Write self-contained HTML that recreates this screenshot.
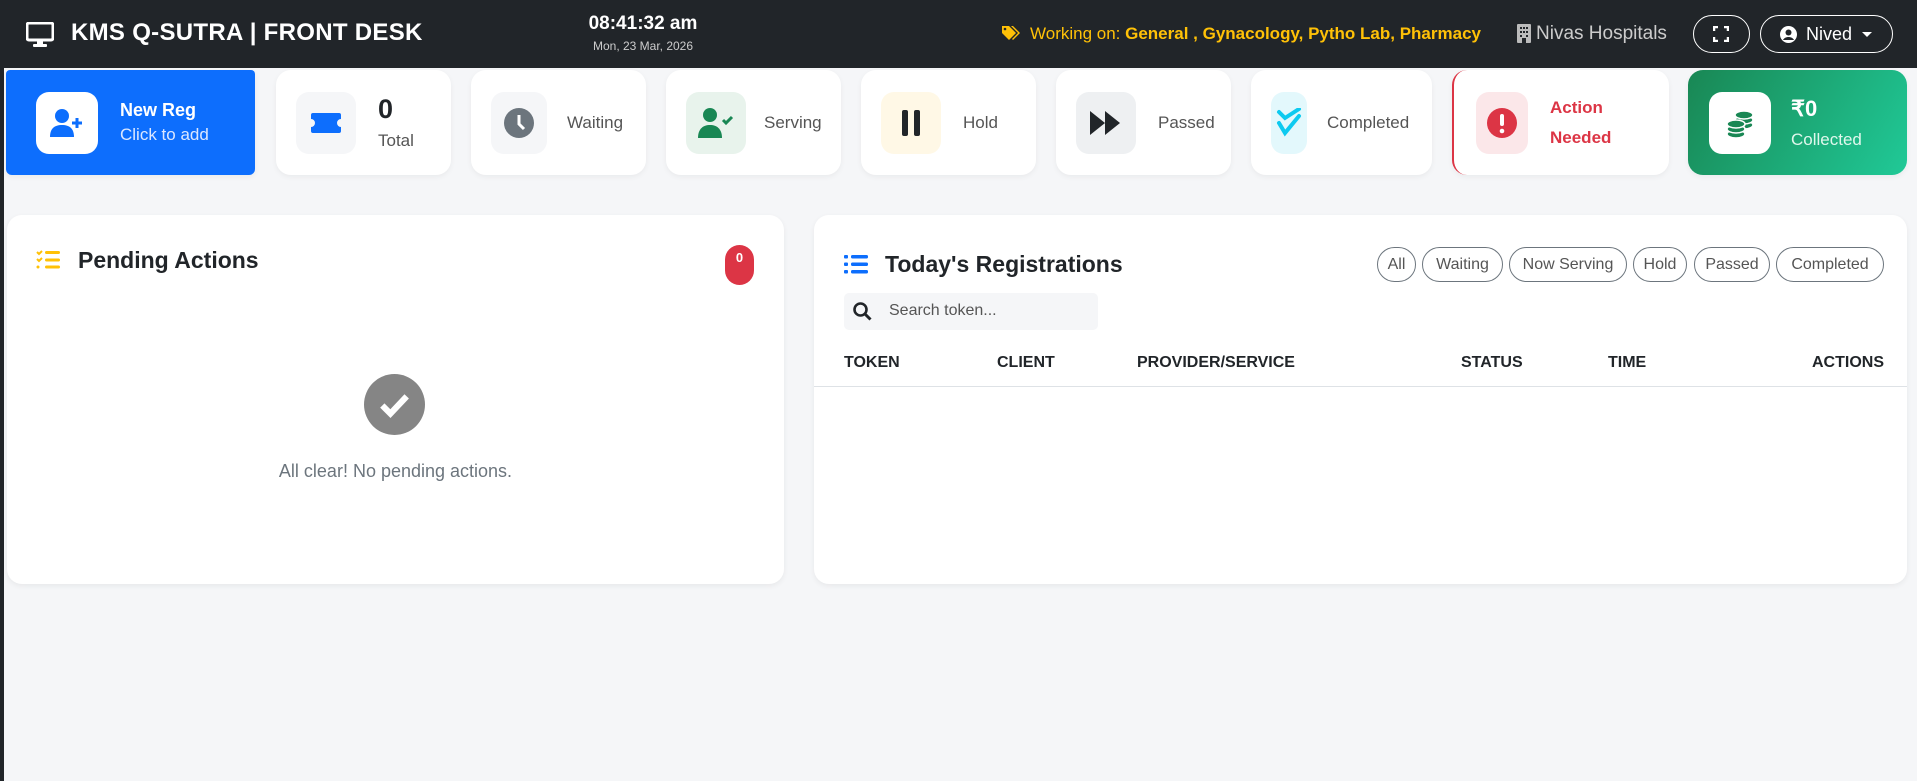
<!DOCTYPE html>
<html><head><meta charset="utf-8"><style>
*{box-sizing:border-box;margin:0;padding:0}
body{width:1917px;height:781px;background:#f5f6f8;font-family:"Liberation Sans",sans-serif;position:relative;overflow:hidden;color:#212529}
.a{position:absolute}
.hdr{left:0;top:0;width:1917px;height:68px;background:#212529}
.lb{left:0;top:0;width:4px;height:781px;background:#212529}
.card{position:absolute;top:70px;height:105px;background:#fff;border-radius:15px;box-shadow:0 2px 6px rgba(0,0,0,.05);display:flex;align-items:center;padding-left:20px}
.ib{width:60px;height:62px;border-radius:13px;display:flex;align-items:center;justify-content:center;flex-shrink:0}
.lab{font-size:17px;color:#555;margin-left:22px}
.panel{position:absolute;top:215px;height:369px;background:#fff;border-radius:15px;box-shadow:0 2px 6px rgba(0,0,0,.06)}
.pill{position:absolute;top:247px;height:35px;border:1px solid #6c757d;border-radius:18px;font-size:16px;color:#555;display:flex;align-items:center;justify-content:center}
.th{position:absolute;top:354px;font-size:16px;font-weight:bold;color:#212529}
</style></head><body>
<div class="a hdr"></div>
<div class="a lb"></div>
<svg class="a" style="left:26px;top:22px" width="28" height="26" viewBox="0 0 28 26"><rect x="1" y="1" width="26" height="17" rx="2" fill="none" stroke="#fff" stroke-width="3"/><rect x="11" y="18" width="6" height="5" fill="#fff"/><rect x="7" y="22" width="14" height="3" rx="1" fill="#fff"/></svg>
<div class="a" style="left:71px;top:19px;color:#fff;font-size:24px;font-weight:bold;letter-spacing:0.3px">KMS Q-SUTRA | FRONT DESK</div>
<div class="a" style="left:543px;top:13px;width:200px;text-align:center;color:#fff;font-size:19px;font-weight:bold">08:41:32 am</div>
<div class="a" style="left:543px;top:39px;width:200px;text-align:center;color:#ccc;font-size:12px">Mon, 23 Mar, 2026</div>
<svg class="a" style="left:1002px;top:25px" width="18" height="16" viewBox="0 0 18 16"><path d="M0 1h7l7 7-7 7-7-7z" fill="#ffc107"/><path d="M9 1h2l7 7-7 7-1-1 6-6z" fill="#ffc107"/><circle cx="3" cy="4" r="1.3" fill="#212529"/></svg>
<div class="a" style="left:1030px;top:24px;color:#ffc107;font-size:17px">Working on: <b>General , Gynacology, Pytho Lab, Pharmacy</b></div>
<svg class="a" style="left:1517px;top:24px" width="14" height="19" viewBox="0 0 14 19"><rect width="14" height="19" rx="1" fill="#bbb"/><g fill="#212529"><rect x="3" y="3" width="2" height="2"/><rect x="6" y="3" width="2" height="2"/><rect x="9" y="3" width="2" height="2"/><rect x="3" y="7" width="2" height="2"/><rect x="6" y="7" width="2" height="2"/><rect x="9" y="7" width="2" height="2"/><rect x="3" y="11" width="2" height="2"/><rect x="9" y="11" width="2" height="2"/><rect x="5" y="14" width="4" height="5"/></g></svg>
<div class="a" style="left:1536px;top:23px;color:#ccc;font-size:19px">Nivas Hospitals</div>
<div class="a" style="left:1693px;top:15px;width:57px;height:38px;border:1px solid #fff;border-radius:19px"></div>
<svg class="a" style="left:1713px;top:26px" width="16" height="16" viewBox="0 0 16 16" fill="none" stroke="#fff" stroke-width="2.5"><path d="M1 5V1h4M11 1h4v4M15 11v4h-4M5 15H1v-4"/></svg>
<div class="a" style="left:1760px;top:15px;width:133px;height:38px;border:1px solid #fff;border-radius:19px"></div>
<svg class="a" style="left:1780px;top:26px" width="17" height="17" viewBox="0 0 17 17"><circle cx="8.5" cy="8.5" r="8.5" fill="#fff"/><circle cx="8.5" cy="6.5" r="3" fill="#212529"/><path d="M3 14c2-4 9-4 11 0" fill="#212529"/></svg>
<div class="a" style="left:1806px;top:24px;color:#fff;font-size:18px">Nived</div>
<div class="a" style="left:1862px;top:32px;width:0;height:0;border-left:5px solid transparent;border-right:5px solid transparent;border-top:5px solid #fff"></div>

<div class="card" style="left:6px;width:249px;background:#0d6efd;border-radius:4px 4px 6px 6px;padding-left:30px">
<div class="ib" style="background:#fff;width:62px"><svg width="34" height="30" viewBox="0 0 34 30"><circle cx="12" cy="8" r="7" fill="#0d6efd"/><path d="M0 29c0-9 5-12 12-12s12 3 12 12z" fill="#0d6efd"/><path d="M27 10v10M22 15h10" stroke="#0d6efd" stroke-width="3"/></svg></div>
<div style="margin-left:22px;color:#fff"><div style="font-size:18px;font-weight:bold">New Reg</div><div style="font-size:17px;margin-top:4px;color:#dbe7ff">Click to add</div></div></div>

<div class="card" style="left:276px;width:175px">
<div class="ib" style="background:#f5f6f8"><svg width="30" height="20" viewBox="0 0 30 20"><path d="M2 0h26a2 2 0 0 1 2 2v4a4 4 0 0 0 0 8v4a2 2 0 0 1-2 2H2a2 2 0 0 1-2-2v-4a4 4 0 0 0 0-8V2a2 2 0 0 1 2-2z" fill="#0d6efd"/></svg></div>
<div style="margin-left:22px"><div style="font-size:27px;font-weight:bold">0</div><div style="font-size:17px;color:#555;margin-top:6px">Total</div></div></div>

<div class="card" style="left:471px;width:175px">
<div class="ib" style="background:#f5f6f8;width:56px"><svg width="30" height="30" viewBox="0 0 30 30"><circle cx="15" cy="15" r="15" fill="#6c757d"/><path d="M15 7v9l5 5" stroke="#fff" stroke-width="3" fill="none"/></svg></div>
<div class="lab" style="margin-left:20px">Waiting</div></div>

<div class="card" style="left:666px;width:175px">
<div class="ib" style="background:#e8f3ec"><svg width="36" height="32" viewBox="0 0 36 32"><circle cx="12" cy="8" r="7" fill="#198754"/><path d="M0 31c0-9 5-13 12-13s12 4 12 13z" fill="#198754"/><path d="M25 13l3 3 6-6" stroke="#198754" stroke-width="3" fill="none"/></svg></div>
<div class="lab" style="margin-left:18px">Serving</div></div>

<div class="card" style="left:861px;width:175px">
<div class="ib" style="background:#fff8e6"><svg width="20" height="26" viewBox="0 0 20 26"><rect x="1" width="6" height="26" rx="2" fill="#212529"/><rect x="13" width="6" height="26" rx="2" fill="#212529"/></svg></div>
<div class="lab" style="margin-left:22px">Hold</div></div>

<div class="card" style="left:1056px;width:175px">
<div class="ib" style="background:#eef0f2"><svg width="32" height="24" viewBox="0 0 32 24"><path d="M0 0l15 12L0 24zM15 0l15 12-15 12z" fill="#212529"/></svg></div>
<div class="lab" style="margin-left:22px">Passed</div></div>

<div class="card" style="left:1251px;width:181px">
<div class="ib" style="background:#e3f8fc;width:36px"><svg width="26" height="30" viewBox="0 0 26 30"><path d="M3 4l6 6 14-9M3 15l6 10 14-17" stroke="#0dcaf0" stroke-width="4" fill="none" stroke-linecap="round"/></svg></div>
<div class="lab" style="margin-left:20px">Completed</div></div>

<div class="card" style="left:1452px;width:217px;border-left:2px solid #dc3545;padding-left:22px">
<div class="ib" style="background:#fbe7e9;width:52px"><svg width="30" height="30" viewBox="0 0 30 30"><circle cx="15" cy="15" r="15" fill="#dc3545"/><rect x="13" y="6" width="4" height="12" rx="2" fill="#fff"/><circle cx="15" cy="23" r="2.3" fill="#fff"/></svg></div>
<div style="margin-left:22px;color:#dc3545;font-size:17px;font-weight:bold;line-height:30px">Action<br>Needed</div></div>

<div class="card" style="left:1688px;width:219px;background:linear-gradient(120deg,#198754,#20c997);padding-left:21px">
<div class="ib" style="background:#fff;width:62px"><svg width="30" height="32" viewBox="0 0 30 32"><g fill="#198754" stroke="#fff" stroke-width="1.6"><ellipse cx="19" cy="18" rx="9" ry="4"/><ellipse cx="19" cy="13" rx="9" ry="4"/><ellipse cx="19" cy="8" rx="9" ry="4"/><ellipse cx="11" cy="27" rx="9" ry="4"/><ellipse cx="11" cy="22" rx="9" ry="4"/><ellipse cx="11" cy="17" rx="9" ry="4"/></g></svg></div>
<div style="margin-left:20px;color:#fff"><div style="font-size:22px;font-weight:bold">₹0</div><div style="font-size:17px;margin-top:8px;color:#dff7ec">Collected</div></div></div>

<div class="panel" style="left:7px;width:777px"></div>
<svg class="a" style="left:36px;top:250px" width="24" height="20" viewBox="0 0 24 20"><path d="M1 2l2 2 3-3M1 9l2 2 3-3" stroke="#ffc107" stroke-width="2" fill="none"/><circle cx="2" cy="17" r="1.5" fill="#ffc107"/><rect x="9" y="1" width="15" height="3" rx="1.5" fill="#ffc107"/><rect x="9" y="8.5" width="15" height="3" rx="1.5" fill="#ffc107"/><rect x="9" y="15.5" width="15" height="3" rx="1.5" fill="#ffc107"/></svg>
<div class="a" style="left:78px;top:247px;font-size:23px;font-weight:bold">Pending Actions</div>
<div class="a" style="left:725px;top:245px;width:29px;height:40px;background:#dc3545;border-radius:15px;color:#fff;font-size:13px;font-weight:bold;text-align:center;padding-top:5px">0</div>
<svg class="a" style="left:364px;top:374px" width="61" height="61" viewBox="0 0 60 60"><circle cx="30" cy="30" r="30" fill="#858585"/><path d="M18 31l8 8 16-17" stroke="#fff" stroke-width="6" fill="none"/></svg>
<div class="a" style="left:7px;top:461px;width:777px;text-align:center;font-size:18px;color:#6c757d">All clear! No pending actions.</div>

<div class="panel" style="left:814px;width:1093px"></div>
<svg class="a" style="left:844px;top:255px" width="24" height="19" viewBox="0 0 24 19" fill="#0d6efd"><rect width="4" height="3.5" rx="1"/><rect y="7.5" width="4" height="3.5" rx="1"/><rect y="15" width="4" height="3.5" rx="1"/><rect x="7" width="17" height="3.5" rx="1.5"/><rect x="7" y="7.5" width="17" height="3.5" rx="1.5"/><rect x="7" y="15" width="17" height="3.5" rx="1.5"/></svg>
<div class="a" style="left:885px;top:251px;font-size:23px;font-weight:bold">Today's Registrations</div>
<div class="pill" style="left:1377px;width:39px">All</div>
<div class="pill" style="left:1422px;width:81px">Waiting</div>
<div class="pill" style="left:1509px;width:118px">Now Serving</div>
<div class="pill" style="left:1633px;width:54px">Hold</div>
<div class="pill" style="left:1694px;width:76px">Passed</div>
<div class="pill" style="left:1776px;width:108px">Completed</div>
<div class="a" style="left:844px;top:293px;width:254px;height:37px;background:#f5f6f8;border-radius:5px"></div>
<svg class="a" style="left:853px;top:302px" width="19" height="19" viewBox="0 0 19 19"><circle cx="7.5" cy="7.5" r="6" stroke="#212529" stroke-width="2.6" fill="none"/><path d="M12 12l5.5 5.5" stroke="#212529" stroke-width="3"/></svg>
<div class="a" style="left:889px;top:302px;font-size:16px;color:#555">Search token...</div>
<div class="th" style="left:844px">TOKEN</div>
<div class="th" style="left:997px">CLIENT</div>
<div class="th" style="left:1137px">PROVIDER/SERVICE</div>
<div class="th" style="left:1461px">STATUS</div>
<div class="th" style="left:1608px">TIME</div>
<div class="th" style="left:1808px;width:76px;text-align:right">ACTIONS</div>
<div class="a" style="left:814px;top:386px;width:1093px;height:1px;background:#dee2e6"></div>
</body></html>
